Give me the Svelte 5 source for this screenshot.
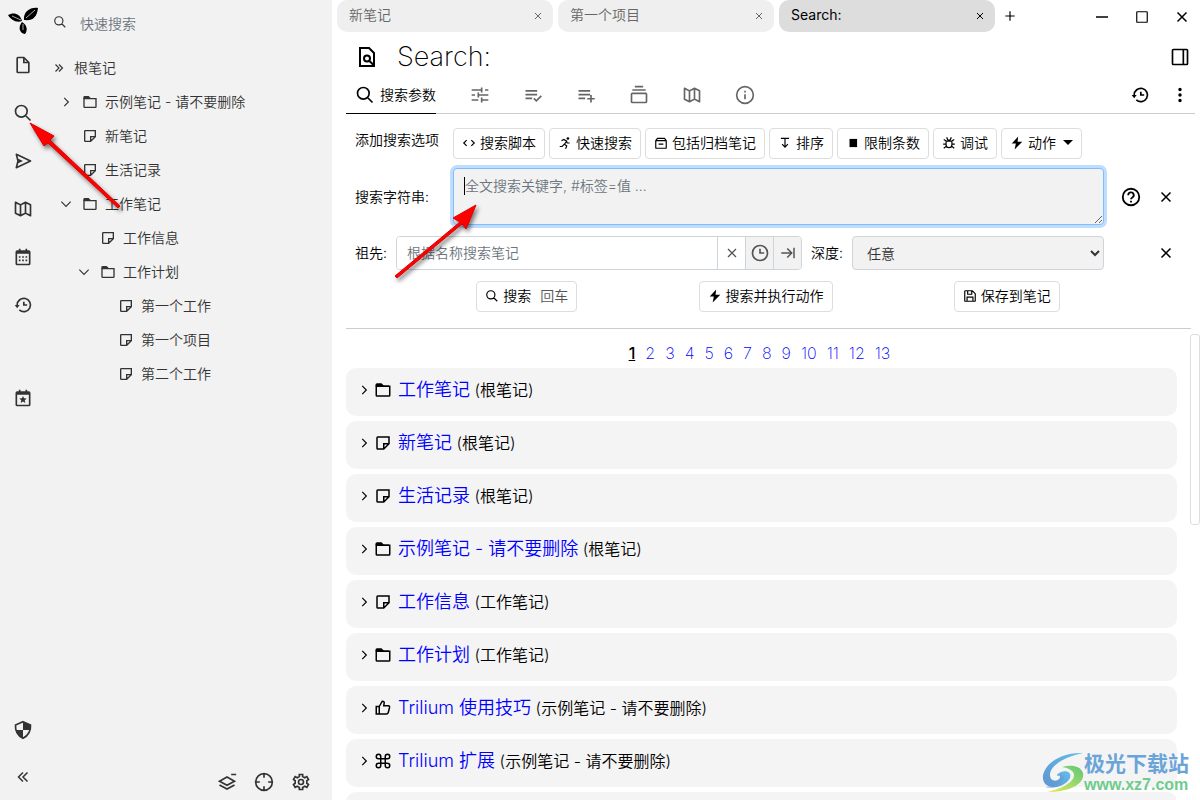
<script lang="ts">
	type Icon = { s?: string; f?: string };

	// 24x24 glyphs: s is stroked, f is filled
	const icons: Record<string, Icon> = {
		file: { s: 'M13 3H6a1 1 0 0 0-1 1v16a1 1 0 0 0 1 1h12a1 1 0 0 0 1-1V9zM13 3v6h6' },
		search: { s: 'M17 10a7 7 0 1 1-14 0 7 7 0 0 1 14 0zM15 15l6 6' },
		send: {
			f: 'M21.426 11.095l-17-8A1 1 0 0 0 3.03 4.242L4.969 12 3.03 19.758a1 1 0 0 0 1.396 1.147l17-8a1 1 0 0 0 0-1.81zM5.481 18.197l.839-3.357L12 12 6.32 9.16l-.839-3.357L18.651 12z',
		},
		map: {
			f: 'M21.447 6.105l-6-3a1 1 0 0 0-.895 0L9 5.882 3.447 3.105A1 1 0 0 0 2 4v13c0 .379.214.725.553.895l6 3a1 1 0 0 0 .895 0L15 18.118l5.553 2.776A1 1 0 0 0 22 20V7c0-.379-.214-.725-.553-.895zM10 7.618l4-2v10.764l-4 2zm-6-2l4 2v10.764l-4-2zm16 12.764l-4-2V5.618l4 2z',
		},
		calendar: {
			f: 'M7 11h2v2H7zM7 15h2v2H7zM11 11h2v2h-2zM11 15h2v2h-2zM15 11h2v2h-2zM15 15h2v2h-2zM5 22h14a2 2 0 0 0 2-2V6a2 2 0 0 0-2-2h-2V2h-2v2H9V2H7v2H5a2 2 0 0 0-2 2v14a2 2 0 0 0 2 2zM19 8v12H5V8z',
		},
		today: {
			f: 'M12 9.5l1.3 2.9 3.2.3-2.4 2.1.7 3.1-2.8-1.6-2.8 1.6.7-3.1-2.4-2.1 3.2-.3zM5 22h14a2 2 0 0 0 2-2V6a2 2 0 0 0-2-2h-2V2h-2v2H9V2H7v2H5a2 2 0 0 0-2 2v14a2 2 0 0 0 2 2zM19 8v12H5V8z',
		},
		history: { s: 'M5 12a8 8 0 1 1 2.6 5.9M13 8v4h4', f: 'M2 12h6l-3 4z' },
		shield: {
			s: 'M12 2l9 4c.5 7-2.500 12.500-9 16-6.500-3.500-9.500-9-9-16z',
			f: 'M12 2l9 4v6h-9zM12 12v10c-5-2.500-8-6-9-10z',
		},
		collapse: { s: 'M12 6l-6 6 6 6M18 6l-6 6 6 6' },
		expand: { s: 'M6 6l6 6-6 6M12 6l6 6-6 6' },
		layer: { s: 'M17 3h6M3 11l9-5 9 5-9 5zM3 15.500l9 5 9-5' },
		target: { s: 'M22 12a10 10 0 1 1-20 0 10 10 0 0 1 20 0zM12 2v5M12 17v5M2 12h5M17 12h5' },
		cog: {
			s: 'M15 12a3 3 0 1 1-6 0 3 3 0 0 1 6 0zM10 3h4v2.500l2.500 1.400L19 5.500l2 3.500-2 1.500v3l2 1.500-2 3.500-2.500-1.400-2.500 1.400V21h-4v-2.500l-2.500-1.400L5 18.500 3 15l2-1.500v-3L3 9l2-3.500 2.500 1.400L10 5.500z',
		},
		folder: { s: 'M3 7v12a1 1 0 0 0 1 1h16a1 1 0 0 0 1-1V7z', f: 'M2 7V5a2 2 0 0 1 2-2h6l3 3h7v1H2z' },
		note: { s: 'M20 4H5a1 1 0 0 0-1 1v14a1 1 0 0 0 1 1h8l7-7zM13 20v-7h7' },
		right: { s: 'M9 5l7 7-7 7' },
		down: { s: 'M4 8l8 8 8-8' },
		close: { s: 'M6 6l12 12M18 6L6 18' },
		plus: { s: 'M12 4v16M4 12h16' },
		minus: { s: 'M4 12h16' },
		square: { s: 'M4 3h16a1 1 0 0 1 1 1v16a1 1 0 0 1-1 1H4a1 1 0 0 1-1-1V4a1 1 0 0 1 1-1z' },
		panel: { s: 'M4 3h16a1 1 0 0 1 1 1v16a1 1 0 0 1-1 1H4a1 1 0 0 1-1-1V4a1 1 0 0 1 1-1zM16 3v18' },
		fileFind: { s: 'M14 3H5v18h14V8zM15 13.500a3 3 0 1 1-6 0 3 3 0 0 1 6 0zM14 15.500l5 5' },
		sliders: { s: 'M2 6h12M18 6h4M14 3v6M2 12h4M10 12h12M10 9v6M2 18h8M14 18h8M14 15v6' },
		listCheck: { s: 'M3 7h14M3 11.500h14M3 16h8M13 16l3 3 6-6' },
		listPlus: { s: 'M3 7h14M3 11.500h14M3 16h8M18 12v9M13.500 16.500h9' },
		collection: { s: 'M7 2h10M4 6h16M4 10h16a1 1 0 0 1 1 1v9a1 1 0 0 1-1 1H4a1 1 0 0 1-1-1v-9a1 1 0 0 1 1-1z' },
		info: { s: 'M22 12a10 10 0 1 1-20 0 10 10 0 0 1 20 0zM12 11v6M12 7v2' },
		help: { s: 'M21 12a9 9 0 1 1-18 0 9 9 0 0 1 18 0zM9 10a3 3 0 1 1 4.500 2.500c-1 .6-1.500 1-1.500 2M12 16v2' },
		dots: { f: 'M12 1a2.600 2.600 0 1 1 0 5.200 2.600 2.600 0 0 1 0-5.200zM12 9.400a2.600 2.600 0 1 1 0 5.200 2.600 2.600 0 0 1 0-5.200zM12 17.800a2.600 2.600 0 1 1 0 5.200 2.600 2.600 0 0 1 0-5.200z' },
		code: { s: 'M8 7l-5 5 5 5M16 7l5 5-5 5' },
		run: { s: 'M6 8l4-2 5 3-4 5 4 3-2 5M11 14l-4 4H3M14 9l2 3h4', f: 'M17 2a2.300 2.300 0 1 1 0 4.600 2.300 2.300 0 0 1 0-4.600z' },
		archive: { s: 'M3 8l3-4h12l3 4v12a1 1 0 0 1-1 1H4a1 1 0 0 1-1-1zM3 8h18M8 14h8' },
		sort: { s: 'M5 4h14M12 5v14M7 14l5 5 5-5' },
		stop: { f: 'M6 5h13v14H6z' },
		bug: { s: 'M7 9h10v6a5 5 0 0 1-10 0zM7 14H2M22 14h-5M3 6l5 3M21 6l-5 3M3 21l5-4M21 21l-5-4M8 2l2 5h4l2-5' },
		bolt: { f: 'M14 1L3 13h7l-2 10 13-13h-8z' },
		save: { s: 'M4 3h12l5 5v12a1 1 0 0 1-1 1H4a1 1 0 0 1-1-1V4a1 1 0 0 1 1-1zM7 21v-7h10v7M8 3v6h7V4' },
		time: { s: 'M21 12a9 9 0 1 1-18 0 9 9 0 0 1 18 0zM12 7v5h5' },
		last: { s: 'M3 12h13M11 6l6 6-6 6M20 5v14' },
		like: { s: 'M3 10h4v10H3zM7 10l4-7c2 0 3 1 2.500 3L13 9h6c1.500 0 2 1 1.700 2.500L19 18c-.4 1.500-1 2-2.500 2H7' },
		command: {
			s: 'M9 9h6v6H9zM9 9V6a3 3 0 1 0-3 3zM15 9h3a3 3 0 1 0-3-3zM15 15v3a3 3 0 1 0 3-3zM9 15H6a3 3 0 1 0 3 3z',
		},
	};

	const launchers = [
		{ icon: 'file', label: '新建笔记' },
		{ icon: 'search', label: '搜索' },
		{ icon: 'send', label: '跳转' },
		{ icon: 'map', label: '笔记地图' },
		{ icon: 'calendar', label: '日历' },
		{ icon: 'history', label: '最近修改' },
	];

	const tree = [
		{ title: '示例笔记 - 请不要删除', level: 0, icon: 'folder', arrow: 'right' },
		{ title: '新笔记', level: 0, icon: 'note', arrow: '' },
		{ title: '生活记录', level: 0, icon: 'note', arrow: '' },
		{ title: '工作笔记', level: 0, icon: 'folder', arrow: 'down' },
		{ title: '工作信息', level: 1, icon: 'note', arrow: '' },
		{ title: '工作计划', level: 1, icon: 'folder', arrow: 'down' },
		{ title: '第一个工作', level: 2, icon: 'note', arrow: '' },
		{ title: '第一个项目', level: 2, icon: 'note', arrow: '' },
		{ title: '第二个工作', level: 2, icon: 'note', arrow: '' },
	];

	const tabs = ['新笔记', '第一个项目', 'Search:'];
	let activeTab = $state(2);

	const ribbon = [
		{ icon: 'sliders', label: '基本属性' },
		{ icon: 'listCheck', label: '自有属性' },
		{ icon: 'listPlus', label: '继承属性' },
		{ icon: 'collection', label: '笔记路径' },
		{ icon: 'map', label: '笔记地图' },
		{ icon: 'info', label: '笔记信息' },
	];

	const options = [
		{ icon: 'code', label: '搜索脚本' },
		{ icon: 'run', label: '快速搜索' },
		{ icon: 'archive', label: '包括归档笔记' },
		{ icon: 'sort', label: '排序' },
		{ icon: 'stop', label: '限制条数' },
		{ icon: 'bug', label: '调试' },
		{ icon: 'bolt', label: '动作', menu: true },
	];

	const pages = Array.from({ length: 13 }, (_, i) => i + 1);
	let page = $state(1);

	const results = [
		{ icon: 'folder', title: '工作笔记', path: '根笔记' },
		{ icon: 'note', title: '新笔记', path: '根笔记' },
		{ icon: 'note', title: '生活记录', path: '根笔记' },
		{ icon: 'folder', title: '示例笔记 - 请不要删除', path: '根笔记' },
		{ icon: 'note', title: '工作信息', path: '工作笔记' },
		{ icon: 'folder', title: '工作计划', path: '工作笔记' },
		{ icon: 'like', title: 'Trilium 使用技巧', path: '示例笔记 - 请不要删除' },
		{ icon: 'command', title: 'Trilium 扩展', path: '示例笔记 - 请不要删除' },
		{ icon: 'note', title: '', path: '' },
	];
</script>

{#snippet glyph(name: string, size: number)}
	<svg class="glyph" width={size} height={size} viewBox="0 0 24 24" aria-hidden="true">
		{#if icons[name].s}<path class="line" d={icons[name].s} />{/if}
		{#if icons[name].f}<path class="solid" d={icons[name].f} />{/if}
	</svg>
{/snippet}

<div class="app">
	<nav class="launcher">
		<button class="logo" type="button" aria-label="菜单">
			<svg width="32" height="30" viewBox="0 0 32 30" aria-hidden="true">
				<path d="M1 9C6 6 13 7 15 15 9 17 4 14 1 9z" />
				<path d="M31 2c-1 9-5 13-14 12C16 6 23 1 31 2z" />
				<path d="M15 16c5 3 6 8 3 12-6-1-7-7-3-12z" />
				<path class="vein" d="M5 10l9 4M28 4l-9 8M16 18v6" />
			</svg>
		</button>
		{#each launchers as item}
			<button class="launch" type="button" aria-label={item.label}>{@render glyph(item.icon, 20)}</button>
		{/each}
		<button class="launch today" type="button" aria-label="今天">{@render glyph('today', 20)}</button>
		<div class="fill"></div>
		<button class="launch" type="button" aria-label="受保护的会话">{@render glyph('shield', 20)}</button>
		<button class="toggle" type="button" aria-label="收起">{@render glyph('collapse', 18)}</button>
	</nav>

	<aside class="tree-pane">
		<div class="quick">
			{@render glyph('search', 14)}
			<input type="text" placeholder="快速搜索" aria-label="快速搜索" />
		</div>
		<div class="tree">
			<div class="node root">{@render glyph('expand', 14)}<span>根笔记</span></div>
			{#each tree as node}
				<div class="node" style="--level: {node.level}">
					<span class="arrow">{#if node.arrow}{@render glyph(node.arrow, 14)}{/if}</span>
					{@render glyph(node.icon, 16)}
					<span>{node.title}</span>
				</div>
			{/each}
		</div>
		<div class="tree-tools">
			<button type="button" aria-label="全部折叠">{@render glyph('layer', 20)}</button>
			<button type="button" aria-label="滚动到当前笔记">{@render glyph('target', 20)}</button>
			<button type="button" aria-label="设置">{@render glyph('cog', 20)}</button>
		</div>
	</aside>

	<main>
		<header class="tab-bar">
			{#each tabs as tab, i}
				<div class="tab" class:active={i === activeTab}>
					<button class="tab-title" type="button" onclick={() => (activeTab = i)}>{tab}</button>
					<button class="tab-close" type="button" aria-label="关闭">{@render glyph('close', 12)}</button>
				</div>
			{/each}
			<button class="new-tab" type="button" aria-label="新标签">{@render glyph('plus', 14)}</button>
			<div class="window-buttons">
				<button type="button" aria-label="最小化">{@render glyph('minus', 18)}</button>
				<button type="button" aria-label="最大化">{@render glyph('square', 14)}</button>
				<button type="button" aria-label="关闭窗口">{@render glyph('close', 18)}</button>
			</div>
		</header>

		<div class="title-row">
			{@render glyph('fileFind', 24)}
			<h1>Search:</h1>
			<button class="tool" type="button" aria-label="右侧面板">{@render glyph('panel', 20)}</button>
		</div>

		<div class="ribbon">
			<button class="ribbon-tab current" type="button">{@render glyph('search', 20)}<span>搜索参数</span></button>
			<div class="ribbon-rest">
				{#each ribbon as item}
					<button class="ribbon-tab" type="button" aria-label={item.label}>{@render glyph(item.icon, 20)}</button>
				{/each}
				<div class="fill"></div>
				<button class="tool" type="button" aria-label="笔记历史">{@render glyph('history', 20)}</button>
				<button class="tool" type="button" aria-label="更多">{@render glyph('dots', 16)}</button>
			</div>
		</div>

		<form class="params" onsubmit={(e) => e.preventDefault()}>
			<div class="row options">
				<span class="label">添加搜索选项</span>
				<div class="option-list">
					{#each options as opt}
						<button class="btn" type="button">
							{@render glyph(opt.icon, 14)}{opt.label}{#if opt.menu}<i class="caret-down"></i>{/if}
						</button>
					{/each}
				</div>
			</div>

			<div class="row">
				<label class="label" for="query">搜索字符串:</label>
				<div class="query-wrap">
					<textarea id="query" placeholder="全文搜索关键字, #标签=值 ..."></textarea>
					<i class="cursor"></i>
				</div>
				<div class="actions">
					<button type="button" aria-label="帮助">{@render glyph('help', 22)}</button>
					<button type="button" aria-label="移除">{@render glyph('close', 18)}</button>
				</div>
			</div>

			<div class="row">
				<label for="ancestor">祖先:</label>
				<div class="input-group">
					<input id="ancestor" type="text" placeholder="根据名称搜索笔记" />
					<button class="clear" type="button" aria-label="清除">{@render glyph('close', 16)}</button>
					<button type="button" aria-label="最近的笔记">{@render glyph('time', 20)}</button>
					<button type="button" aria-label="前往">{@render glyph('last', 18)}</button>
				</div>
				<label for="depth">深度:</label>
				<select id="depth"><option>任意</option></select>
				<div class="actions">
					<button type="button" aria-label="移除">{@render glyph('close', 18)}</button>
				</div>
			</div>

			<div class="submit-row">
				<button class="btn" type="submit">{@render glyph('search', 14)}搜索<kbd>回车</kbd></button>
				<button class="btn" type="button">{@render glyph('bolt', 14)}搜索并执行动作</button>
				<button class="btn" type="button">{@render glyph('save', 14)}保存到笔记</button>
			</div>
		</form>

		<div class="scroller">
			<div class="results">
				<div class="pager">
					{#each pages as p}
						{#if p === page}
							<span class="here">{p}</span>
						{:else}
							<a href="#page-{p}" onclick={() => (page = p)}>{p}</a>
						{/if}
					{/each}
				</div>
				{#each results as result}
					<div class="result">
						{#if result.title}
							{@render glyph('right', 14)}
							{@render glyph(result.icon, 18)}
							<p><a href="#{result.title}">{result.title}</a> <span>({result.path})</span></p>
						{/if}
					</div>
				{/each}
			</div>
			<div class="scrollbar" aria-hidden="true"><div class="thumb"></div></div>
		</div>
	</main>

	<svg class="pointer first" width="110" height="104" viewBox="0 0 110 104" aria-hidden="true">
		<path d="M5 9L29 22l-4 4 70 66-2 2-70-65-4 3z" />
	</svg>
	<svg class="pointer second" width="100" height="90" viewBox="0 0 100 90" aria-hidden="true">
		<path d="M86 10L76 34l-4-5-65 54-2-2 65-54-7-4z" />
	</svg>

	<div class="watermark">
		<svg width="42" height="42" viewBox="0 0 42 42" aria-hidden="true">
			<defs>
				<linearGradient id="blue" x1="0" y1="1" x2="1" y2="0">
					<stop offset="0" stop-color="#5f95cf" />
					<stop offset="1" stop-color="#62bdec" />
				</linearGradient>
				<linearGradient id="green" x1="0" y1="1" x2="1" y2="0">
					<stop offset="0" stop-color="#e4ec5a" />
					<stop offset="1" stop-color="#5cc679" />
				</linearGradient>
			</defs>
			<path fill="url(#blue)" d="M41 1C21 0 4 10 1 23c-1 7 3 12 10 12 7 0 13-4 13-9 0-4-6-6-9-3 3 0 4 2 2 4-3 3-9 2-9-4C8 13 23 5 41 1z" />
			<path fill="url(#green)" d="M20 15c9-3 19-1 21 6 2 9-10 19-36 19 13-3 27-9 27-17 0-4-5-7-12-8z" />
			<path fill="url(#blue)" d="M3 35c9 2 21-1 25-9 2-5-3-8-9-6-3 1-4 3-4 4 3-2 7-1 7 2-1 5-9 9-19 9z" />
		</svg>
		<div>
			<strong>极光下载站</strong>
			<span>www.xz7.com</span>
		</div>
	</div>
</div>

<style>
	:global(body) {
		background: #fff;
	}

	.app {
		position: relative;
		display: flex;
		height: 100vh;
		overflow: hidden;
		font: 350 14px/20px Inter, 'Noto Sans CJK SC', sans-serif;
		color: #000;
	}

	.app * {
		box-sizing: border-box;
	}

	button,
	input,
	textarea,
	select {
		font: inherit;
		color: inherit;
	}

	button {
		display: flex;
		align-items: center;
		justify-content: center;
		padding: 0;
		border: none;
		background: none;
	}

	.glyph {
		flex: none;
	}

	.line {
		fill: none;
		stroke: currentColor;
		stroke-width: 2;
	}

	.solid {
		fill: currentColor;
		fill-rule: evenodd;
	}

	.fill {
		flex: 1;
	}

	/* left column */
	.launcher {
		flex: none;
		display: flex;
		flex-direction: column;
		width: 46px;
		background: #f2f2f2;
		color: #333;
	}

	.logo {
		height: 41px;
		color: #000;
	}

	.vein {
		fill: none;
		stroke: #aaa;
	}

	.launch {
		height: 48px;
	}

	.today {
		margin-top: 45px;
	}

	.toggle {
		height: 46px;
	}

	/* note tree */
	.tree-pane {
		flex: none;
		display: flex;
		flex-direction: column;
		width: 286px;
		background: #f2f2f2;
		color: #333;
	}

	.quick {
		display: flex;
		align-items: center;
		gap: 13px;
		height: 44px;
		padding: 0 7px;
	}

	.quick input {
		width: 100%;
		padding: 4px 0 0;
		border: none;
		background: none;
		outline: none;
	}

	::placeholder {
		color: #6c757d;
		opacity: 1;
	}

	.tree {
		flex: 1;
		padding-top: 7px;
	}

	.node {
		display: flex;
		align-items: center;
		gap: 7px;
		height: 34px;
		padding-left: calc(13px + var(--level) * 18px);
		white-space: nowrap;
	}

	.node .line {
		stroke-width: 2;
	}

	.node.root {
		gap: 8px;
		padding-left: 6px;
	}

	.arrow {
		display: flex;
		width: 16px;
	}

	.tree-tools {
		display: flex;
		justify-content: flex-end;
		gap: 17px;
		padding: 0 21px 8px;
	}

	/* main column */
	main {
		flex: 1;
		display: flex;
		flex-direction: column;
		min-width: 0;
	}

	.tab-bar {
		display: flex;
		gap: 5px;
		height: 32px;
		padding-left: 5px;
	}

	.tab {
		display: flex;
		flex: 0 1 216px;
		padding: 0 9px 0 12px;
		border-radius: 10px;
		background: #efefef;
		color: #666;
	}

	.tab.active {
		background: #ddd;
		color: #000;
		font-weight: 400;
	}

	.tab-title {
		flex: 1;
		justify-content: flex-start;
		padding-bottom: 2px;
	}

	.new-tab {
		width: 20px;
	}

	.window-buttons {
		display: flex;
		margin: 2px -2px 0 auto;
	}

	.window-buttons button {
		width: 40px;
	}

	.title-row {
		display: flex;
		align-items: center;
		height: 48px;
		padding: 2px 0 0 23px;
	}

	h1 {
		flex: 1;
		margin: 0 0 0 18px;
		font-size: 27px;
		line-height: 32px;
		font-weight: 200;
	}

	.tool {
		width: 40px;
	}

	.ribbon {
		display: flex;
		height: 34px;
		margin-left: 14px;
	}

	.ribbon-rest {
		flex: 1;
		display: flex;
		margin-right: 5px;
		padding: 0 0 4px 17px;
		border-bottom: 1px solid #ccc;
	}

	.ribbon-rest .tool:last-child {
		margin-right: -5px;
	}

	.ribbon-tab {
		width: 53px;
		color: #666;
	}

	.ribbon-tab.current {
		gap: 5px;
		width: auto;
		padding: 0 0 4px 9px;
		border-bottom: 1px solid #000;
		color: #000;
	}

	/* search parameters */
	.params {
		display: flex;
		flex-direction: column;
		gap: 11px;
		margin: 0 9px 0 14px;
		padding: 14px 0 16px 9px;
		border-bottom: 1px solid #ccc;
	}

	.row {
		display: flex;
		align-items: center;
		gap: 9px;
	}

	.row.options {
		align-items: flex-start;
		margin-bottom: -2px;
	}

	.label {
		flex: none;
		width: 89px;
	}

	.options .label {
		padding-top: 2px;
		white-space: nowrap;
	}

	.option-list {
		display: flex;
		gap: 4px;
	}

	.btn {
		gap: 4px;
		height: 31px;
		padding: 0 8px 2px;
		border: 1px solid #ddd;
		border-radius: 4px;
		background: #fff;
		white-space: nowrap;
	}

	.caret-down {
		margin-left: 3px;
		border: 5px solid transparent;
		border-top-color: #000;
		border-bottom: none;
	}

	.query-wrap {
		position: relative;
		flex: 1;
		display: flex;
	}

	textarea {
		width: 100%;
		height: 57px;
		padding: 7px 11px;
		border: 1px solid #80bdff;
		border-radius: 4px;
		outline: none;
		background: #f2f2f2;
		box-shadow: 0 0 0 3px #bfdeff;
	}

	.cursor {
		position: absolute;
		top: 9px;
		left: 11px;
		width: 1px;
		height: 18px;
		background: #000;
	}

	.actions {
		flex: none;
		display: flex;
		justify-content: flex-end;
		gap: 15px;
		width: 62px;
		margin-right: 16px;
	}

	.input-group {
		flex: 404 1 0;
		display: flex;
		height: 34px;
		border: 1px solid #ced4da;
		border-radius: 4px;
		overflow: hidden;
	}

	.input-group input {
		flex: 1;
		min-width: 0;
		padding: 0 10px;
		border: none;
		outline: none;
	}

	.input-group button {
		width: 28px;
		border-left: 1px solid #ced4da;
		background: #f2f2f2;
		color: #555;
	}

	.input-group .clear {
		background: #fff;
	}

	select {
		flex: 240 1 0;
		height: 34px;
		padding: 0 0 0 10px;
		border: 1px solid #ced4da;
		border-radius: 4px;
		background: #f2f2f2;
		color: #333;
	}

	.submit-row {
		display: flex;
		justify-content: space-evenly;
		margin-right: 10px;
	}

	kbd {
		margin-left: 5px;
		font: inherit;
		color: #555;
	}

	/* results */
	.scroller {
		flex: 1;
		display: flex;
		min-height: 0;
		padding-left: 14px;
	}

	.results {
		flex: 1;
		display: flex;
		flex-direction: column;
		gap: 5px;
		overflow: hidden;
	}

	.pager {
		flex: none;
		display: flex;
		justify-content: center;
		align-items: flex-end;
		gap: 10px;
		height: 34px;
		padding-right: 4px;
		font-size: 16px;
		font-weight: 200;
	}

	a {
		color: #00f;
		text-decoration: none;
	}

	.here {
		font-weight: 500;
		text-decoration: underline;
	}

	.result {
		flex: none;
		display: flex;
		align-items: center;
		height: 48px;
		padding: 0 11px 4px;
		border-radius: 10px;
		background: #f4f4f4;
	}

	.result p {
		margin: 0 0 0 6px;
		font-size: 16px;
		line-height: 24px;
	}

	.result .glyph + .glyph {
		margin-left: 3px;
	}

	.result a {
		font-size: 18px;
	}

	.scrollbar {
		width: 10px;
		margin-left: 13px;
		padding-top: 5px;
	}

	.thumb {
		height: 41%;
		border: 1px solid #ddd;
		border-radius: 3px;
		background: #fff;
	}

	/* marks laid over the page */
	.pointer {
		position: absolute;
		fill: #f00;
		stroke: #d00;
		stroke-width: 1;
		filter: drop-shadow(2px 3px 2px rgba(0, 0, 0, 0.5));
		pointer-events: none;
	}

	.first {
		top: 114px;
		left: 25px;
	}

	.second {
		top: 195px;
		left: 390px;
	}

	.watermark {
		position: absolute;
		right: 11px;
		bottom: 6px;
		display: flex;
		align-items: center;
		color: #6aa4d8;
	}

	.watermark div {
		display: flex;
		flex-direction: column;
	}

	.watermark strong {
		font-size: 21px;
		font-weight: 700;
		line-height: 24px;
	}

	.watermark span {
		font: 700 16px/18px 'Liberation Sans', sans-serif;
		color: #6fcb8c;
	}
</style>
